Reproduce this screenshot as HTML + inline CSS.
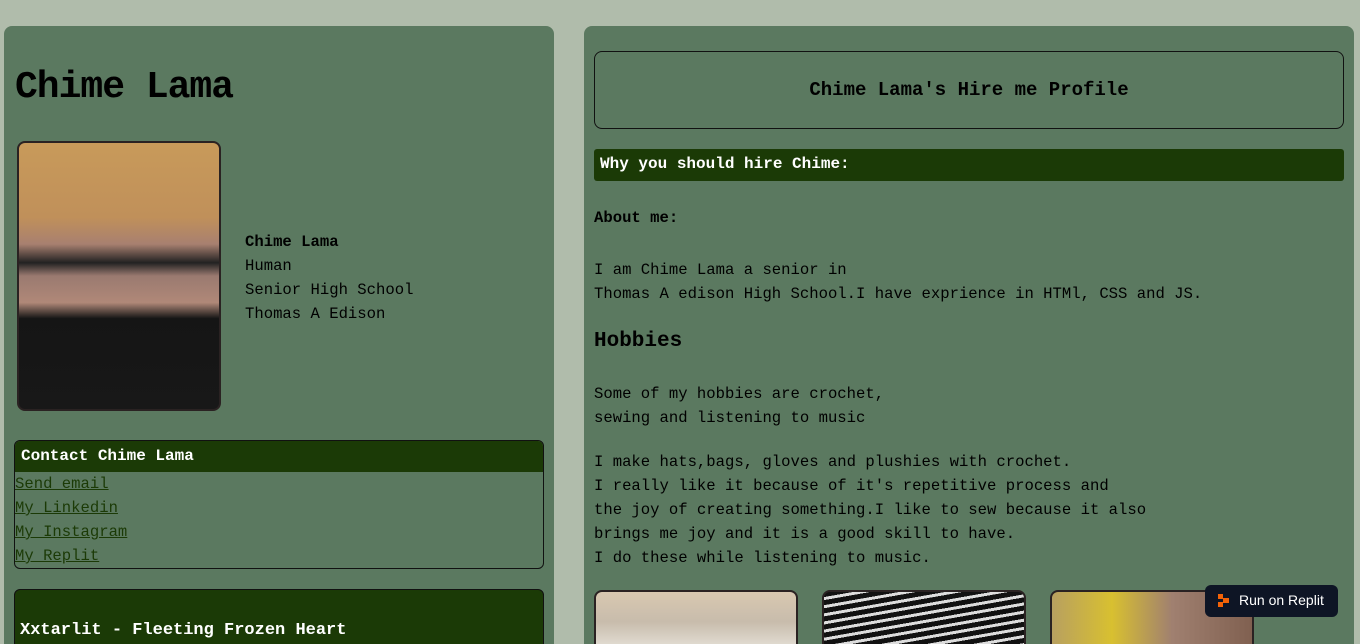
<!DOCTYPE html>
<html style="overflow:hidden;height:644px"><head><style>
body{margin:0;width:1360px;height:644px;overflow:hidden;background:#b0bcab;font-family:"Liberation Mono","DejaVu Sans Mono",monospace;color:#000;position:relative}
.p{position:absolute;background:#5b7960;border-radius:8px}
.a{position:absolute;white-space:nowrap}
.t{font-size:15.6px;line-height:24px}
</style></head><body>
<div class="p" style="left:4px;top:26px;width:550px;height:618px;border-bottom-left-radius:0;border-bottom-right-radius:0"></div>
<div class="p" style="left:584px;top:26px;width:770px;height:618px;border-bottom-left-radius:0;border-bottom-right-radius:0"></div>
<div class="a" style="left:15px;top:66px;font-size:38px;font-weight:bold;letter-spacing:-1px">Chime Lama</div>
<div class="a" style="left:17px;top:141px;width:200px;height:266px;border:2px solid #2a2222;border-radius:8px;overflow:hidden;background:linear-gradient(180deg,#c89a5a 0%,#c0905a 28%,#a88070 38%,#222 45%,#9a7a70 50%,#b08878 60%,#151515 66%,#181818 100%)"></div>
<div class="a t" style="left:245px;top:230px"><b>Chime Lama</b><br>Human<br>Senior High School<br>Thomas A Edison</div>
<div class="a" style="left:14px;top:440px;width:528px;height:127px;border:1px solid #111;border-radius:6px;overflow:hidden">
<div style="background:#1b3a06;color:#fff;height:31px;line-height:30px;padding-left:6px;font-weight:bold;font-size:16px">Contact Chime Lama</div>
<div class="t" style="color:#1b3a06;text-decoration:underline">Send email<br>My Linkedin<br>My Instagram<br>My Replit</div></div>
<div class="a" style="left:14px;top:589px;width:528px;height:80px;border:1px solid #111;border-radius:6px;background:#1b3a06"></div>
<div class="a" style="left:20px;top:621px;color:#fff;font-weight:bold;font-size:17px">Xxtarlit - Fleeting Frozen Heart</div>
<div class="a" style="left:594px;top:51px;width:748px;height:76px;border:1px solid #111;border-radius:8px;text-align:center;line-height:76px;font-weight:bold;font-size:19px">Chime Lama's Hire me Profile</div>
<div class="a" style="left:594px;top:149px;width:744px;height:32px;background:#1b3a06;border-radius:3px;color:#fff;font-weight:bold;font-size:16px;line-height:31px;padding-left:6px">Why you should hire Chime:</div>
<div class="a t" style="left:594px;top:206px;font-weight:bold">About me:</div>
<div class="a t" style="left:594px;top:258px">I am Chime Lama a senior in<br>Thomas A edison High School.I have exprience in HTMl, CSS and JS.</div>
<div class="a" style="left:594px;top:330px;font-size:21px;font-weight:bold">Hobbies</div>
<div class="a t" style="left:594px;top:382px">Some of my hobbies are crochet,<br>sewing and listening to music</div>
<div class="a t" style="left:594px;top:450px">I make hats,bags, gloves and plushies with crochet.<br>I really like it because of it's repetitive process and<br>the joy of creating something.I like to sew because it also<br>brings me joy and it is a good skill to have.<br>I do these while listening to music.</div>
<div class="a" style="left:594px;top:590px;width:200px;height:60px;border:2px solid #2a2222;border-radius:8px;background:linear-gradient(180deg,#d8c8b0 0%,#c8bcac 50%,#e8e4dc 100%)"></div>
<div class="a" style="left:822px;top:590px;width:200px;height:60px;border:2px solid #2a2222;border-radius:8px;background:repeating-linear-gradient(170deg,#111 0 5px,#ddd 5px 8px)"></div>
<div class="a" style="left:1050px;top:590px;width:200px;height:60px;border:2px solid #2a2222;border-radius:8px;background:linear-gradient(90deg,#b8a060,#d8c030 30%,#a08070 60%,#806050)"></div>
<div class="a" style="left:1205px;top:585px;width:133px;height:32px;background:#0e1525;border-radius:6px;color:#fff;font-family:'Liberation Sans',sans-serif;font-size:14px;line-height:31px">
<span style="position:absolute;left:13px;top:9px;width:5px;height:5px;background:#f26207"></span><span style="position:absolute;left:18px;top:13px;width:6px;height:5px;background:#f26207"></span><span style="position:absolute;left:13px;top:17px;width:5px;height:5px;background:#f26207"></span>
<span style="position:absolute;left:34px">Run on Replit</span></div>
</body></html>
